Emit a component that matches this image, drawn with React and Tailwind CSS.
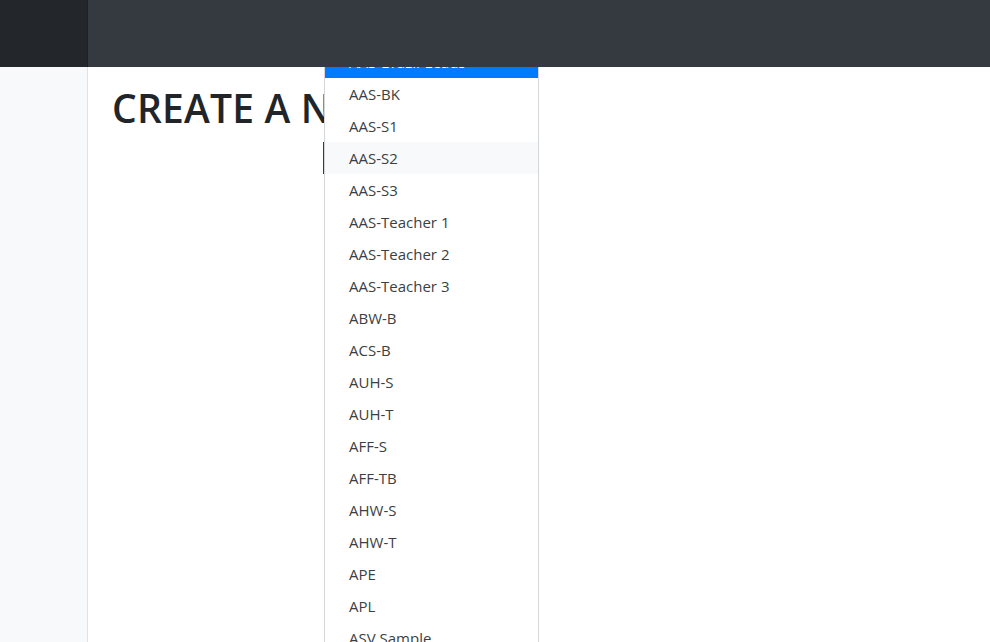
export default function App() {
  const groups = [
    "AAS-BK",
    "AAS-S1",
    "AAS-S2",
    "AAS-S3",
    "AAS-Teacher 1",
    "AAS-Teacher 2",
    "AAS-Teacher 3",
    "ABW-B",
    "ACS-B",
    "AUH-S",
    "AUH-T",
    "AFF-S",
    "AFF-TB",
    "AHW-S",
    "AHW-T",
    "APE",
    "APL",
    "ASV Sample",
  ];

  return (
    <div
      className="relative h-[642px] overflow-hidden flex flex-col bg-white"
      style={{ fontFamily: '"Open Sans", "Noto Sans", sans-serif' }}
    >
      {/* top bar */}
      <header className="relative z-20 flex h-[67px] shrink-0">
        <div className="w-[88px] bg-[#23272b] border-r border-[#1d2124]" />
        <div className="flex-1 bg-[#343a40]" />
      </header>

      <div className="flex flex-1">
        <aside className="w-[88px] bg-[#f8f9fa] border-r border-[#dee2e6]" />
        <main className="flex-1 px-6 pt-[17px]">
          <h1 className="text-[39px] leading-[48px] font-semibold text-[#212529] tracking-[0.2px]">
            CREATE A NEW USER
          </h1>
        </main>
      </div>

      {/* toggle edge behind the menu */}
      <div className="absolute left-[323px] top-[142px] h-[32px] w-[2px] bg-[#343a40] z-0" />

      {/* open dropdown list */}
      <div className="absolute z-10 left-[324px] top-[46px] w-[215px] bg-white border-x border-[#d4d7da]">
        <div className="h-[32px] flex items-center pl-6 bg-[#007bff] text-white text-[15px]">
          AAS-Brazil-Leads
        </div>
        {groups.map((g) => (
          <div
            key={g}
            className={`h-[32px] flex items-center pl-6 text-[15px] text-[#3a3f44] ${
              g === "AAS-S2" ? "bg-[#f8f9fa]" : "bg-white"
            }`}
          >
            {g}
          </div>
        ))}
      </div>
    </div>
  );
}
